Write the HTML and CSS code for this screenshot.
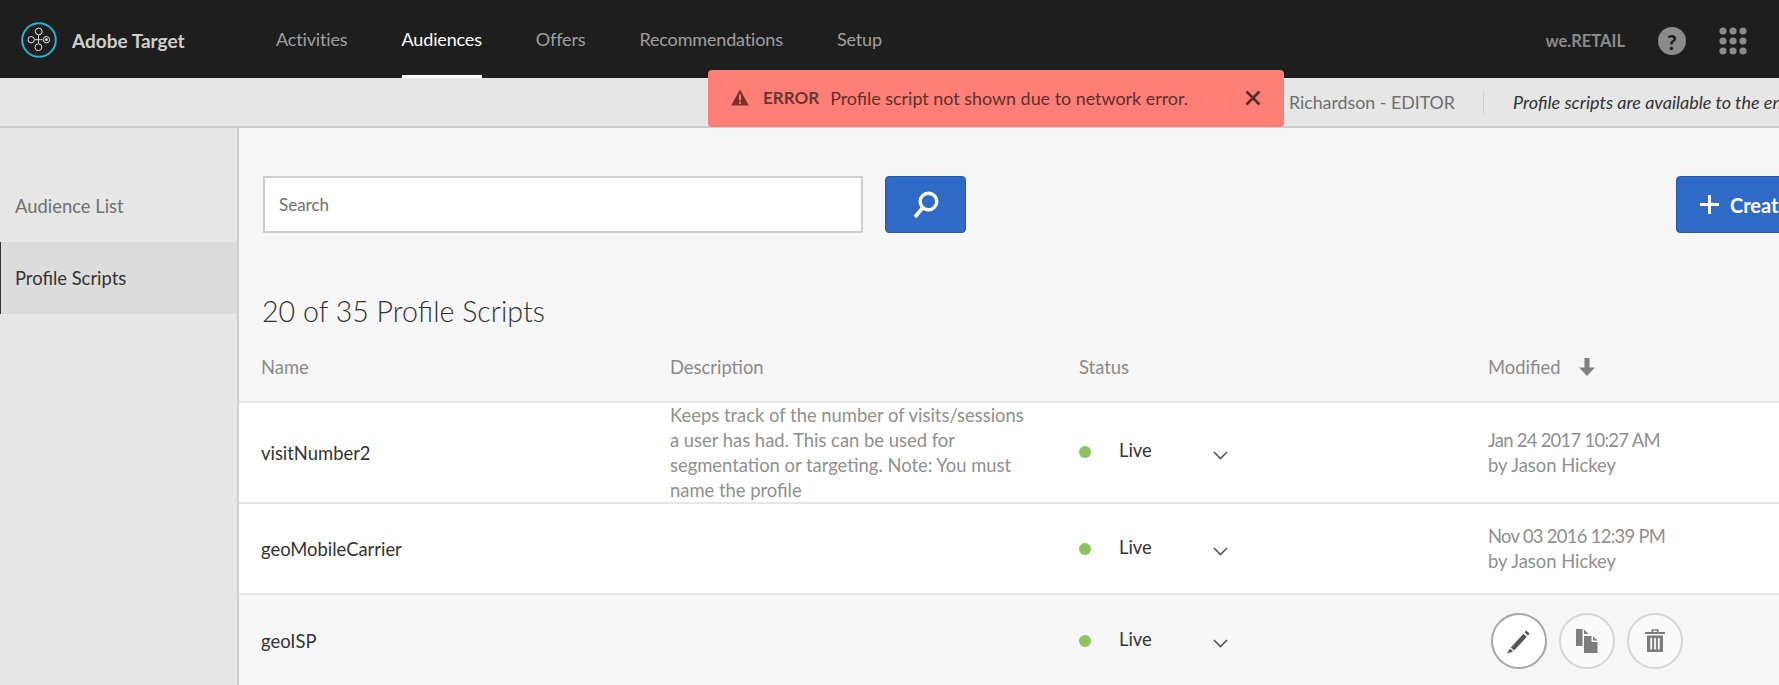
FILE: index.html
```html
<!DOCTYPE html>
<html lang="en">
<head>
<meta charset="utf-8">
<title>Adobe Target - Profile Scripts</title>
<link rel="stylesheet" href="styles.css">
</head>
<body>
<header class="topnav">
  <div class="brand">
    <svg class="logo" width="36" height="36" viewBox="0 0 36 36" fill="none">
      <circle cx="18" cy="18" r="16.8" stroke="#27b3d1" stroke-width="2"/>
      <path d="M17.5 13v8.5M13.5 17.7h8" stroke="#d8d8d8" stroke-width="1"/>
      <circle cx="17.7" cy="9.5" r="3.4" fill="#1e1e1e" stroke="#e4e4e4"/>
      <circle cx="10.2" cy="17.7" r="3.2" fill="#1e1e1e" stroke="#e4e4e4"/>
      <circle cx="17.4" cy="25.2" r="3.4" fill="#1e1e1e" stroke="#e4e4e4"/>
      <circle cx="25.4" cy="17.7" r="3.2" fill="#1e1e1e" stroke="#e4e4e4"/>
      <circle cx="25.4" cy="17.7" r="1.4" fill="#e4e4e4"/>
    </svg>
    <span class="brand-name">Adobe Target</span>
  </div>
  <nav class="menu">
    <a class="menu-item">Activities</a>
    <a class="menu-item is-active">Audiences</a>
    <a class="menu-item">Offers</a>
    <a class="menu-item">Recommendations</a>
    <a class="menu-item">Setup</a>
  </nav>
  <div class="nav-right">
    <span class="tenant">we.RETAIL</span>
    <span class="help">?</span>
    <svg class="apps" width="28" height="28" viewBox="0 0 28 28" fill="#8b8b8b">
      <circle cx="4" cy="4" r="3.6"/><circle cx="14" cy="4" r="3.6"/><circle cx="24" cy="4" r="3.6"/>
      <circle cx="4" cy="14" r="3.6"/><circle cx="14" cy="14" r="3.6"/><circle cx="24" cy="14" r="3.6"/>
      <circle cx="4" cy="24" r="3.6"/><circle cx="14" cy="24" r="3.6"/><circle cx="24" cy="24" r="3.6"/>
    </svg>
  </div>
</header>

<div class="subbar">
  <span class="user">Jason Richardson - EDITOR</span>
  <div class="banner"><em>Profile scripts are available to the entire account</em></div>
</div>

<div class="toast">
  <svg class="toast-icon" width="18" height="17" viewBox="0 0 18 17">
    <path d="M9 0.5 17.8 16.5H0.2Z" fill="#7b2f29"/>
    <path d="M8 5.5h2v6H8zM8 12.7h2v2H8z" fill="#ff7f76"/>
  </svg>
  <strong class="toast-label">ERROR</strong>
  <span class="toast-text">Profile script not shown due to network error.</span>
  <svg class="toast-close" width="16" height="16" viewBox="0 0 16 16"><path d="M1.5 1.5l13 13M14.500 1.5l-13 13" stroke="#4b2f2d" stroke-width="2.6" fill="none"/></svg>
</div>

<div class="layout">
  <aside class="sidebar">
    <a class="side-item">Audience List</a>
    <a class="side-item is-active">Profile Scripts</a>
  </aside>
  <main class="content">
    <div class="toolbar">
      <div class="search">Search</div>
      <button class="search-btn" aria-label="Search">
        <svg width="28" height="28" viewBox="0 0 28 28" fill="none">
          <circle cx="16.5" cy="10.5" r="8.3" stroke="#fff" stroke-width="3.4"/>
          <path d="M10.5 17 3 26" stroke="#fff" stroke-width="3.6"/>
        </svg>
      </button>
      <button class="create-btn">
        <svg width="19" height="19" viewBox="0 0 19 19"><path d="M9.5 0v19M0 9.5h19" stroke="#fff" stroke-width="3"/></svg>
        <span>Create Script</span>
      </button>
    </div>
    <h1 class="title">20 of 35 Profile Scripts</h1>
    <div class="row row-head">
      <div>Name</div>
      <div>Description</div>
      <div>Status</div>
      <div class="sort">Modified
        <svg width="16" height="18" viewBox="0 0 16 18"><path d="M5.5 0h5v9.5H16L8 18 0 9.5h5.5z" fill="#808080"/></svg>
      </div>
    </div>
    <div class="row row-tall">
      <div class="name">visitNumber2</div>
      <div class="desc">Keeps track of the number of visits/sessions a user has had. This can be used for segmentation or targeting. Note: You must name the profile</div>
      <div class="status"><i class="dot"></i><span class="live">Live</span>
        <svg class="chev" width="15" height="9" viewBox="0 0 15 9"><path d="M1 1l6.5 6.5L14 1" stroke="#555" stroke-width="1.6" fill="none"/></svg>
      </div>
      <div class="modified"><span class="date">Jan 24 2017 10:27 AM</span><br>by Jason Hickey</div>
    </div>
    <div class="row">
      <div class="name">geoMobileCarrier</div>
      <div class="desc"></div>
      <div class="status"><i class="dot"></i><span class="live">Live</span>
        <svg class="chev" width="15" height="9" viewBox="0 0 15 9"><path d="M1 1l6.5 6.5L14 1" stroke="#555" stroke-width="1.6" fill="none"/></svg>
      </div>
      <div class="modified"><span class="date">Nov 03 2016 12:39 PM</span><br>by Jason Hickey</div>
    </div>
    <div class="row row-hover">
      <div class="name">geoISP</div>
      <div class="desc"></div>
      <div class="status"><i class="dot"></i><span class="live">Live</span>
        <svg class="chev" width="15" height="9" viewBox="0 0 15 9"><path d="M1 1l6.5 6.5L14 1" stroke="#555" stroke-width="1.6" fill="none"/></svg>
      </div>
      <div class="actions">
        <button class="circle is-focus" aria-label="Edit">
          <svg width="26" height="26" viewBox="0 0 26 26" fill="#555"><path d="M20.2 2.6l3.400 3-1.600 1.800-3.400-3zM17.400 5.800l3.400 3L8.200 22.400l-3.400-3z"/><path d="M4 20.600l3.200 2.800L1 25.500z"/></svg>
        </button>
        <button class="circle" aria-label="Copy">
          <svg width="24" height="26" viewBox="0 0 24 26" fill="#7d7d7d"><path d="M1 1h6.500v17H1zM9 1.500 13.500 6H9zM9 8h7.500v6H22.500v11H9zM18 8.200 22.500 12.500H18z"/></svg>
        </button>
        <button class="circle" aria-label="Delete">
          <svg width="22" height="26" viewBox="0 0 22 26" fill="#7d7d7d"><path d="M1 4h20v2H1z"/><path d="M7.500 1.200h7V4h-1.700V2.800H9.200V4H7.500z"/><path d="M3 7.500h16V24H3zM6.300 10v11.500h1.800V10zm3.800 0v11.500h1.800V10zm3.800 0v11.500h1.800V10z" fill-rule="evenodd"/></svg>
        </button>
      </div>
    </div>
  </main>
</div>
</body>
</html>
```
FILE: styles.css
```css
* { box-sizing: border-box; }
html, body { margin: 0; height: 685px; overflow: hidden; }
body {
  position: relative;
  width: 1779px;
  font-family: Lato, "Open Sans", sans-serif;
  font-size: 18.4px;
  background: #f6f6f6;
  color: #333;
}

/* top navigation */
.topnav {
  display: flex;
  align-items: stretch;
  height: 78px;
  background: #1e1e1e;
}
.brand {
  display: flex;
  align-items: center;
  width: 276px;
  padding: 2px 0 0 21px;
  gap: 15px;
}
.brand-name { font-size: 19px; font-weight: 700; color: #cfcfcf; }
.menu { display: flex; gap: 54px; }
.menu-item {
  display: flex;
  align-items: center;
  padding-top: 3px;
  border-bottom: 3px solid transparent;
  color: #a0a0a0;
  font-size: 18px;
  letter-spacing: -0.15px;
}
.menu-item.is-active { color: #fff; border-bottom-color: #fff; }
.nav-right {
  display: flex;
  align-items: center;
  gap: 33px;
  margin-left: auto;
  padding: 4px 32px 0 0;
}
.tenant { color: #8b8b8b; font-weight: 700; font-size: 16.5px; }
.help {
  display: flex;
  align-items: center;
  justify-content: center;
  width: 28px;
  height: 28px;
  border-radius: 50%;
  background: #8b8b8b;
  color: #1e1e1e;
  font-weight: 900;
  font-size: 21px;
}
.apps { display: block; }

/* sub bar */
.subbar {
  display: flex;
  align-items: center;
  justify-content: flex-end;
  height: 50px;
  background: #e6e6e6;
  border-bottom: 2px solid #cdcdcd;
  white-space: nowrap;
}
.user { color: #6e6e6e; font-size: 17.8px; padding-right: 28px; }
.banner {
  flex: 0 0 296px;
  overflow: hidden;
  height: 24px;
  line-height: 24px;
  padding-left: 29px;
  border-left: 1px solid #d2d2d2;
  font-size: 18px;
  color: #333;
}

/* toast */
.toast {
  position: absolute;
  left: 708px;
  top: 70px;
  width: 576px;
  height: 57px;
  display: flex;
  align-items: center;
  padding: 0 23px 2px;
  background: #ff7f76;
  border-radius: 4px;
}
.toast-icon { flex: none; }
.toast-label { margin-left: 14px; color: #6a3531; font-size: 17px; }
.toast-text { margin-left: 11px; color: #5c302d; font-size: 17.9px; }
.toast-close { margin-left: auto; }

/* layout */
.layout { display: flex; height: 557px; }
.sidebar {
  flex: 0 0 239px;
  padding-top: 42px;
  background: #e6e6e6;
  border-right: 2px solid #cfcfcf;
}
.side-item {
  display: flex;
  align-items: center;
  height: 72px;
  padding-left: 14px;
  border-left: 1px solid transparent;
  color: #707070;
}
.side-item.is-active {
  background: #dcdcdc;
  border-left-color: #333;
  color: #333;
}
.content { flex: 1; min-width: 0; }

.toolbar {
  display: flex;
  gap: 22px;
  padding: 48px 0 0 24px;
  height: 105px;
}
.search {
  flex: 0 0 600px;
  display: flex;
  align-items: center;
  padding-left: 14px;
  background: #fff;
  border: 2px solid #cfcfcf;
  color: #707070;
  font-size: 17px;
}
.search-btn, .create-btn {
  display: flex;
  align-items: center;
  border: 1px solid #2858a6;
  border-radius: 4px;
  background: #2f6bc6;
  color: #fff;
  font: inherit;
}
.search-btn { flex: 0 0 81px; justify-content: center; padding: 0; }
.create-btn {
  flex: 0 0 170px;
  margin-left: 688px;
  gap: 11px;
  padding: 0 0 0 23px;
  font-size: 20px;
  font-weight: 700;
  white-space: nowrap;
}

.title {
  margin: 60px 0 0 23px;
  font-size: 28.6px;
  font-weight: 300;
  line-height: 36px;
  color: #333;
}

.row {
  display: grid;
  grid-template-columns: repeat(4, 409px);
  align-items: center;
  height: 91px;
  padding-left: 22px;
  background: #fff;
  border-bottom: 2px solid #e6e6e6;
}
.row-head {
  height: 74px;
  padding-top: 12px;
  padding-bottom: 8px;
  background: transparent;
  color: #8a8a8a;
}
.row-tall { height: 101px; }
.row-tall .status { margin-top: -3px; }
.row-tall .chev { margin-top: 8px; }
.row-hover { background: #f6f6f6; border-bottom: 0; }
.name { color: #333; }
.desc { width: 360px; line-height: 25px; color: #8f8f8f; }
.status { display: flex; align-items: center; }
.dot {
  width: 12px;
  height: 12px;
  border-radius: 50%;
  background: #8cc460;
}
.live { margin: -3px 0 0 28px; width: 94px; color: #333; }
.chev { margin-top: 5px; }
.modified { line-height: 25px; color: #8f8f8f; }
.date { letter-spacing: -0.7px; }
.sort { display: flex; align-items: center; gap: 19px; }
.actions { display: flex; gap: 12px; padding-left: 3px; margin-top: 1px; }
.circle {
  display: flex;
  align-items: center;
  justify-content: center;
  width: 56px;
  height: 56px;
  padding: 0;
  background: #fafafa;
  border: 2px solid #d6d6d6;
  border-radius: 50%;
}
.circle.is-focus { border-color: #a5a5a5; background: #fff; }
```
